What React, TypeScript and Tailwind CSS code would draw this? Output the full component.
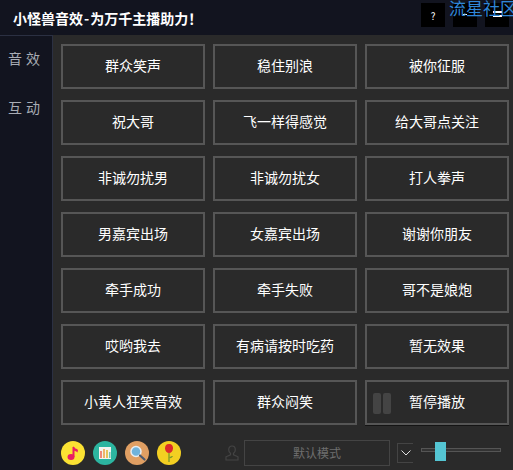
const labels = [
  "群众笑声", "稳住别浪", "被你征服",
  "祝大哥", "飞一样得感觉", "给大哥点关注",
  "非诚勿扰男", "非诚勿扰女", "打人拳声",
  "男嘉宾出场", "女嘉宾出场", "谢谢你朋友",
  "牵手成功", "牵手失败", "哥不是娘炮",
  "哎哟我去", "有病请按时吃药", "暂无效果",
  "小黄人狂笑音效", "群众闷笑", "暂停播放",
];

function Music() {
  return (
    <svg viewBox="0 0 24 24" className="w-6 h-6">
      <circle cx="12" cy="12" r="12" fill="#fbe233" />
      <path d="M12.500 6v10" stroke="#e91e63" strokeWidth="2" fill="none" />
      <ellipse cx="10" cy="16" rx="3.500" ry="3" fill="#e91e63" />
      <path d="M12 5c1 2.500 4 2.500 5 4l-.5 2.500c-1.500-1.500-3.500-1.500-4.500-2.500z" fill="#e91e63" />
    </svg>
  );
}

function Eq() {
  return (
    <svg viewBox="0 0 24 24" className="w-6 h-6">
      <circle cx="12" cy="12" r="12" fill="#2cb5a0" />
      <rect x="6" y="6" width="12" height="12" fill="#f4f4f0" />
      <rect x="7" y="10" width="2" height="7" fill="#ef8a7a" />
      <rect x="10" y="8" width="2" height="9" fill="#f0b56a" />
      <rect x="13" y="9" width="2" height="8" fill="#e6c65c" />
      <rect x="16" y="11" width="1.500" height="6" fill="#7cc7b0" />
    </svg>
  );
}

function Search() {
  return (
    <svg viewBox="0 0 24 24" className="w-6 h-6">
      <circle cx="12" cy="12" r="12" fill="#e09f63" />
      <circle cx="11" cy="10.500" r="5" fill="#6fb3dc" stroke="#e8eef2" strokeWidth="1.500" />
      <path d="M15 14.500l4.500 4" stroke="#4a5a70" strokeWidth="2.200" strokeLinecap="round" />
    </svg>
  );
}

function Rose() {
  return (
    <svg viewBox="0 0 24 24" className="w-6 h-6">
      <circle cx="12" cy="12" r="12" fill="#f3cf22" />
      <path d="M12 12v9" stroke="#7c9a2a" strokeWidth="1.300" />
      <path d="M12 17c1-1.500 2.500-2 4-2-.5 1.500-2 2.500-4 2z" fill="#7c9a2a" />
      <path d="M12 3c3 0 4 2 4 4.500S14 12 12 12s-4-2-4-4.500S9 3 12 3z" fill="#dc2a2a" />
    </svg>
  );
}

export default function App() {
  return (
    <div className="w-[513px] h-[470px] flex flex-col bg-[#2a2a2a] overflow-hidden font-['Noto_Sans_CJK_SC',sans-serif]">
      <header className="relative h-[35px] shrink-0 bg-[#12141f] flex items-center pl-[13px]">
        <h1 className="text-[14px] font-bold text-white leading-none whitespace-nowrap">
          小怪兽音效<span className="mx-px">-</span>为万千主播助力！
        </h1>
        <div className="ml-auto flex gap-2 pr-1 mt-[-5px]">
          <div className="w-6 h-6 bg-black text-white text-[10px] flex items-center justify-center">?</div>
          <div className="w-6 h-6 bg-black flex justify-center pt-[11px]">
            <div className="w-1 h-px bg-white" />
          </div>
          <div className="w-6 h-6 bg-black flex justify-center pt-[8px]">
            <div className="w-[9px] h-[6px] border-y-2 border-white" />
          </div>
        </div>
        <div className="absolute left-[449px] top-[-3px] w-[64px] overflow-hidden text-[17px] leading-[22px] whitespace-nowrap text-[#2f86d8]">流星社区</div>
      </header>
      <div className="flex flex-1 min-h-0">
        <nav className="w-[53px] shrink-0 bg-[#12141f] border-r border-[#2b3042] border-t text-[#a8acb4] text-[14px] flex flex-col pl-[8px] pt-[12px] gap-[29px]">
          <div className="tracking-[4px] leading-[20px] whitespace-nowrap">音效</div>
          <div className="tracking-[4px] leading-[20px] whitespace-nowrap">互动</div>
        </nav>
        <main className="flex-1 min-w-0 flex flex-col pl-2 pr-1 pt-[9px]">
          <div className="grid grid-cols-[144px_144px_144px] gap-x-2 gap-y-[11px]">
            {labels.map((l, i) => (
              <button
                key={l}
                className={
                  i === 20
                    ? "relative h-[45px] pb-[2px] border-2 border-[#565656] bg-[#2a2a2a] text-white text-[14px] flex items-center justify-center shadow-[0_1px_0_#141414]"
                    : "relative h-[45px] pb-[2px] border-2 border-[#565656] bg-[#2a2a2a] text-white text-[14px] flex items-center justify-center"
                }
              >
                {i === 20 && (
                  <span className="absolute left-[6px] top-[11px] flex gap-[2px]">
                    <span className="w-2 h-[21px] rounded-[2px] bg-[#444444]" />
                    <span className="w-2 h-[21px] rounded-[2px] bg-[#444444]" />
                  </span>
                )}
                {l}
              </button>
            ))}
          </div>
          <div className="flex items-center mt-[15px]">
            <div className="flex gap-2">
              <Music />
              <Eq />
              <Search />
              <Rose />
            </div>
            <svg viewBox="0 0 16 16" className="ml-[43px] w-[16px] h-[16px]" fill="none" stroke="#444444" strokeWidth="1.200">
              <path d="M8 1c2.200 0 3.300 1.700 3.300 3.700 0 1.600-.8 3-1.800 3.600v1.500l4.500 2V15H2v-3.200l4.500-2V8.300C5.500 7.700 4.700 6.300 4.700 4.700 4.700 2.700 5.800 1 8 1z" />
            </svg>
            <div className="ml-[4px] w-[146px] h-[26px] border border-[#444444] text-[#6e6e6e] text-[12px] flex items-center justify-center">默认模式</div>
            <div className="ml-[7px] w-4 h-5 border-y border-l border-[#444444] flex items-center justify-center">
              <svg viewBox="0 0 10 6" className="w-[10px] h-[6px]" fill="none" stroke="#e0e0e0" strokeWidth="1">
                <path d="M.5.500L5 5 9.500.500" />
              </svg>
            </div>
            <div className="relative ml-2 mb-[6px] w-[80px] h-1 border border-[#555555] bg-[#333333]">
              <div className="absolute left-[13px] top-[-7px] w-[11px] h-[19px] bg-[#54c5d3]" />
            </div>
          </div>
        </main>
      </div>
    </div>
  );
}
